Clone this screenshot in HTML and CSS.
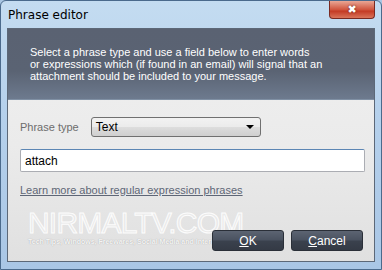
FILE: index.html
```html
<!DOCTYPE html>
<html lang="en">
<head>
    <meta charset="UTF-8">
    <title>Phrase editor</title>
    <link rel="stylesheet" href="styles.css">
</head>
<body>
    <div class="window">
        <div class="titlebar">
            <span class="title">Phrase editor</span>
            <span class="close">&#10006;</span>
        </div>
        <div class="client">
            <div class="banner">
                <p>Select a phrase type and use a field below to enter words<br>
                or expressions which (if found in an email) will signal that an<br>
                attachment should be included to your message.</p>
            </div>
            <div class="form">
                <div class="row">
                    <label for="ptype">Phrase type</label>
                    <div class="select" id="ptype">
                        <span>Text</span>
                        <span class="arrow"></span>
                    </div>
                </div>
                <input class="field" type="text" value="attach">
                <a class="link" href="#">Learn more about regular expression phrases</a>
                <div class="watermark">
                    <div class="wm-big">NIRMALTV.COM</div>
                    <div class="wm-small">Tech Tips, Windows, Freewares, Social Media and Internet</div>
                </div>
                <div class="buttons">
                    <button><u>O</u>K</button>
                    <button><u>C</u>ancel</button>
                </div>
            </div>
        </div>
    </div>
</body>
</html>
```

FILE: styles.css
```css
body { margin: 0; background: #a9c6e3; font-family: "Segoe UI", "DejaVu Sans", sans-serif; }
.window { width: 382px; height: 270px; box-sizing: border-box; border: 1px solid #4b6a8c; border-radius: 6px 6px 0 0; background: linear-gradient(180deg, #c4dcf1 0%, #b6d1ec 40%, #a9c6e5 100%); display: flex; flex-direction: column; }
.titlebar { height: 27px; display: flex; justify-content: space-between; align-items: flex-start; }
.title { font-size: 12px; color: #000; margin: 7px 0 0 7px; }
.close { width: 46px; height: 18px; margin-right: 6px; box-sizing: border-box; border: 1px solid #7a2a22; border-top: none; border-radius: 0 0 4px 4px; background: linear-gradient(180deg, #e9a795 0%, #d0563f 50%, #c43b25 60%, #d9745a 100%); color: #fff; font-size: 11px; font-weight: bold; text-align: center; line-height: 17px; text-shadow: 0 0 2px #5a1a10; }
.client { margin: 0 6px 7px 6px; flex: 1; border: 1px solid #5c6878; display: flex; flex-direction: column; background: linear-gradient(180deg, #f0f0f0 0%, #ebebeb 50%, #e0e0e0 100%); }
.banner { height: 70px; background: linear-gradient(180deg, #5a6272 0%, #5a6373 60%, #6d7a8e 100%); border-bottom: 1px solid #8090a4; }
.banner p { margin: 17px 0 0 22px; color: #fff; font-family: "Liberation Sans", Arial, sans-serif; font-size: 11px; line-height: 12px; }
.form { position: relative; flex: 1; padding: 17px 10px 0 12px; font-family: "Liberation Sans", Arial, sans-serif; font-size: 11px; }
.row { display: flex; align-items: center; gap: 12px; }
.row label { color: #6d6d6d; font-size: 11px; }
.select { width: 170px; height: 20px; box-sizing: border-box; border: 1px solid #707070; border-radius: 3px; background: linear-gradient(180deg, #f2f2f2 0%, #ebebeb 50%, #dddddd 51%, #cfcfcf 100%); display: flex; justify-content: space-between; align-items: center; padding: 0 6px 0 4px; font-size: 12px; color: #000; }
.arrow { width: 0; height: 0; border-left: 4px solid transparent; border-right: 4px solid transparent; border-top: 4px solid #000; }
.field { display: block; margin-top: 12px; width: 345px; height: 23px; box-sizing: border-box; border: 1px solid #abadb3; border-top-color: #5c86b4; border-radius: 2px; padding: 0 4px; font-family: "Liberation Sans", Arial, sans-serif; font-size: 12px; color: #000; background: #fff; }
.link { display: inline-block; margin-top: 12px; color: #5e6676; font-size: 11px; text-decoration: underline; }
.buttons { position: relative; display: flex; justify-content: flex-end; gap: 7px; margin-top: 34px; margin-right: 1px; }
.buttons button { width: 72px; height: 21px; border: 1px solid #2a2f38; border-radius: 3px; background: linear-gradient(180deg, #5c6472 0%, #4b5361 45%, #3a414d 55%, #343a45 100%); color: #fff; font-family: "Liberation Sans", Arial, sans-serif; font-size: 12px; padding: 0; }
.watermark { position: absolute; left: 20px; top: 108px; pointer-events: none; }
.wm-big { font-family: "Liberation Sans", Arial, sans-serif; font-size: 30px; letter-spacing: -0.8px; color: rgba(255,255,255,0.25); -webkit-text-stroke: 1px rgba(255,255,255,0.9); line-height: 30px; }
.wm-small { font-family: "Liberation Sans", Arial, sans-serif; font-size: 7px; font-weight: bold; color: rgba(255,255,255,0.9); text-shadow: 0 0 1px #999; white-space: nowrap; }
```
